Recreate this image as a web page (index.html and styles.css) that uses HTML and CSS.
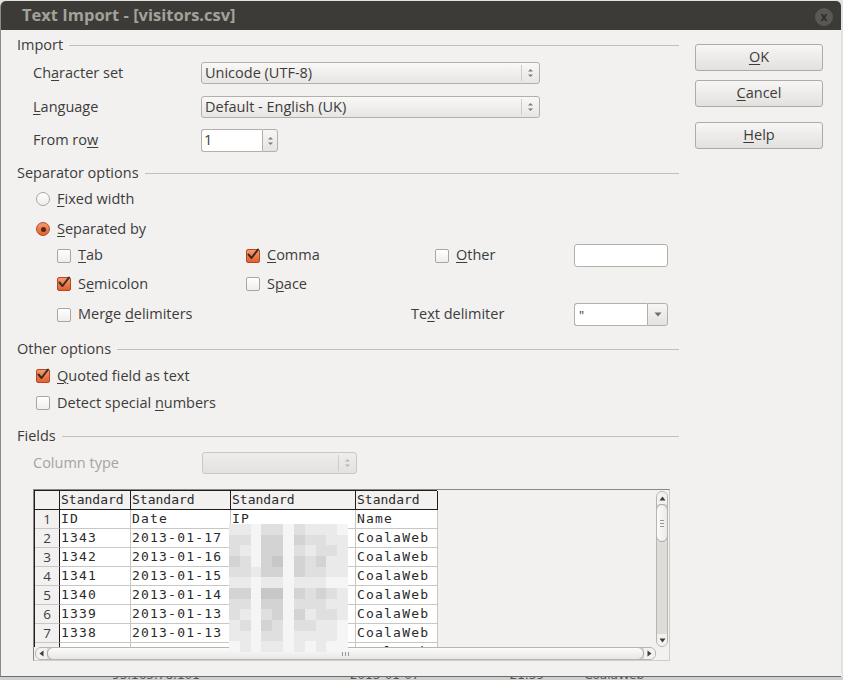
FILE: index.html
```html
<!DOCTYPE html>
<html lang="en">
<head>
<meta charset="utf-8">
<title>Text Import - [visitors.csv]</title>
<link rel="stylesheet" href="styles.css">
</head>
<body>
<div class="screen">
  <div class="window">
    <div class="titlebar">
      <span class="title">Text Import - [visitors.csv]</span>
      <span class="close">x</span>
    </div>
    <div class="content">
      <div class="main">
        <div class="ghead g-import"><span class="t">Import</span><i class="rule"></i></div>

        <div class="frow r-charset">
          <span class="flabel t">Ch<u>a</u>racter set</span>
          <div class="combo wide"><span class="ctext t">Unicode (UTF-8)</span>
            <span class="updown"><svg width="7" height="12" viewBox="0 0 7 12"><path d="M1 4.5 L3.5 2 L6 4.5Z"/><path d="M1 7.5 L3.5 10 L6 7.5Z"/></svg></span>
          </div>
        </div>

        <div class="frow r-lang">
          <span class="flabel t"><u>L</u>anguage</span>
          <div class="combo wide"><span class="ctext t">Default - English (UK)</span>
            <span class="updown"><svg width="7" height="12" viewBox="0 0 7 12"><path d="M1 4.5 L3.5 2 L6 4.5Z"/><path d="M1 7.5 L3.5 10 L6 7.5Z"/></svg></span>
          </div>
        </div>

        <div class="frow r-from">
          <span class="flabel t">From ro<u>w</u></span>
          <div class="spinbox">
            <span class="entry"><span class="t">1</span></span>
            <span class="spinbtn"><svg width="7" height="12" viewBox="0 0 7 12"><path d="M1 4.5 L3.5 2 L6 4.5Z"/><path d="M1 7.5 L3.5 10 L6 7.5Z"/></svg></span>
          </div>
        </div>

        <div class="ghead g-sep"><span class="t">Separator options</span><i class="rule"></i></div>

        <div class="opt r-fixed"><span class="radio"></span><span class="t"><u>F</u>ixed width</span></div>
        <div class="opt r-sepby"><span class="radio on"></span><span class="t"><u>S</u>eparated by</span></div>

        <div class="sepgrid">
          <div class="chk a1"><span class="box"></span><span class="t"><u>T</u>ab</span></div>
          <div class="chk a2"><span class="box on"><svg width="16" height="16" viewBox="0 0 16 16"><path d="M3.5 7.5 L6.5 11 L13 2.5"/></svg></span><span class="t"><u>C</u>omma</span></div>
          <div class="chk a3"><span class="box"></span><span class="t"><u>O</u>ther</span></div>
          <div class="entrybox a4"></div>

          <div class="chk b1"><span class="box on"><svg width="16" height="16" viewBox="0 0 16 16"><path d="M3.5 7.5 L6.5 11 L13 2.5"/></svg></span><span class="t">S<u>e</u>micolon</span></div>
          <div class="chk b2"><span class="box"></span><span class="t">S<u>p</u>ace</span></div>

          <div class="chk c1"><span class="box"></span><span class="t">Merge <u>d</u>elimiters</span></div>
          <div class="tlabel c3"><span class="t">Te<u>x</u>t delimiter</span></div>
          <div class="dropcombo c4"><span class="dentry">"</span><span class="dbtn"><svg width="8" height="5" viewBox="0 0 8 5"><path d="M0.5 0.5 L7.5 0.5 L4 4.5Z"/></svg></span></div>
        </div>

        <div class="ghead g-other"><span class="t">Other options</span><i class="rule"></i></div>
        <div class="opt r-quoted"><span class="box on"><svg width="16" height="16" viewBox="0 0 16 16"><path d="M3.5 7.5 L6.5 11 L13 2.5"/></svg></span><span class="t"><u>Q</u>uoted field as text</span></div>
        <div class="opt r-detect"><span class="box"></span><span class="t">Detect special <u>n</u>umbers</span></div>

        <div class="ghead g-fields"><span class="t">Fields</span><i class="rule"></i></div>
        <div class="frow r-coltype">
          <span class="flabel disabled t">Column type</span>
          <div class="combo narrow off"><span class="ctext"></span>
            <span class="updown"><svg width="7" height="12" viewBox="0 0 7 12"><path d="M1 4.5 L3.5 2 L6 4.5Z"/><path d="M1 7.5 L3.5 10 L6 7.5Z"/></svg></span>
          </div>
        </div>

        <div class="tablebox">
          <div class="sheetarea">
            <div class="sheet">
              <div class="corner"></div>
              <div class="hd">Standard</div><div class="hd">Standard</div><div class="hd">Standard</div><div class="hd">Standard</div>

              <div class="rn">1</div><div class="cell">ID</div><div class="cell">Date</div><div class="cell">IP</div><div class="cell">Name</div>
              <div class="rn">2</div><div class="cell">1343</div><div class="cell">2013-01-17</div><div class="cell"></div><div class="cell">CoalaWeb</div>
              <div class="rn">3</div><div class="cell">1342</div><div class="cell">2013-01-16</div><div class="cell"></div><div class="cell">CoalaWeb</div>
              <div class="rn">4</div><div class="cell">1341</div><div class="cell">2013-01-15</div><div class="cell"></div><div class="cell">CoalaWeb</div>
              <div class="rn">5</div><div class="cell">1340</div><div class="cell">2013-01-14</div><div class="cell"></div><div class="cell">CoalaWeb</div>
              <div class="rn">6</div><div class="cell">1339</div><div class="cell">2013-01-13</div><div class="cell"></div><div class="cell">CoalaWeb</div>
              <div class="rn">7</div><div class="cell">1338</div><div class="cell">2013-01-13</div><div class="cell"></div><div class="cell">CoalaWeb</div>
              <div class="rn">8</div><div class="cell">1337</div><div class="cell">2013-01-12</div><div class="cell"></div><div class="cell">CoalaWeb</div>
            </div>
          </div>
          <div class="vscroll">
            <span class="varrow"><svg width="7" height="5" viewBox="0 0 7 5"><path d="M0.5 4.5 L3.5 0.5 L6.5 4.5Z"/></svg></span>
            <span class="vthumb"><i></i><i></i><i></i></span>
            <span class="vtrack"></span>
            <span class="varrow"><svg width="7" height="5" viewBox="0 0 7 5"><path d="M0.5 0.5 L3.5 4.5 L6.5 0.5Z"/></svg></span>
          </div>
          <div class="hscroll">
            <span class="harrow"><svg width="5" height="7" viewBox="0 0 5 7"><path d="M4.5 0.5 L0.5 3.5 L4.5 6.5Z"/></svg></span>
            <span class="hthumb"><i></i><i></i><i></i></span>
            <span class="harrow"><svg width="5" height="7" viewBox="0 0 5 7"><path d="M0.5 0.5 L4.5 3.5 L0.5 6.5Z"/></svg></span>
          </div>
          <div class="scorner"></div>

          <div class="mosaic">
            <i class="m2"></i><i class="m2"></i><i class="m1"></i><i class="m3"></i><i class="m3"></i><i class="m1"></i><i class="m3"></i><i class="m2"></i><i class="m2"></i><i class="m2"></i><i class="m1"></i>
            <i class="m3"></i><i class="m3"></i><i class="m1"></i><i class="m4"></i><i class="m4"></i><i class="m1"></i><i class="m4"></i><i class="m3"></i><i class="m3"></i><i class="m2"></i><i class="m2"></i>
            <i class="m3"></i><i class="m2"></i><i class="m1"></i><i class="m4"></i><i class="m4"></i><i class="m1"></i><i class="m3"></i><i class="m2"></i><i class="m3"></i><i class="m3"></i><i class="m2"></i>
            <i class="m4"></i><i class="m3"></i><i class="m1"></i><i class="m4"></i><i class="m5"></i><i class="m1"></i><i class="m4"></i><i class="m3"></i><i class="m4"></i><i class="m2"></i><i class="m2"></i>
            <i class="m3"></i><i class="m3"></i><i class="m2"></i><i class="m4"></i><i class="m4"></i><i class="m1"></i><i class="m4"></i><i class="m3"></i><i class="m3"></i><i class="m2"></i><i class="m2"></i>
            <i class="m2"></i><i class="m2"></i><i class="m1"></i><i class="m2"></i><i class="m2"></i><i class="m1"></i><i class="m2"></i><i class="m2"></i><i class="m2"></i><i class="m1"></i><i class="m1"></i>
            <i class="m4"></i><i class="m4"></i><i class="m1"></i><i class="m5"></i><i class="m5"></i><i class="m1"></i><i class="m4"></i><i class="m3"></i><i class="m4"></i><i class="m3"></i><i class="m2"></i>
            <i class="m3"></i><i class="m3"></i><i class="m1"></i><i class="m4"></i><i class="m4"></i><i class="m1"></i><i class="m3"></i><i class="m3"></i><i class="m3"></i><i class="m2"></i><i class="m2"></i>
            <i class="m3"></i><i class="m2"></i><i class="m1"></i><i class="m3"></i><i class="m4"></i><i class="m1"></i><i class="m4"></i><i class="m2"></i><i class="m3"></i><i class="m3"></i><i class="m2"></i>
            <i class="m2"></i><i class="m3"></i><i class="m1"></i><i class="m4"></i><i class="m3"></i><i class="m1"></i><i class="m3"></i><i class="m3"></i><i class="m2"></i><i class="m2"></i><i class="m1"></i>
            <i class="m2"></i><i class="m2"></i><i class="m1"></i><i class="m3"></i><i class="m3"></i><i class="m1"></i><i class="m2"></i><i class="m2"></i><i class="m2"></i><i class="m2"></i><i class="m1"></i>
            <i class="m1"></i><i class="m2"></i><i class="m1"></i><i class="m2"></i><i class="m2"></i><i class="m1"></i><i class="m2"></i><i class="m1"></i><i class="m2"></i><i class="m1"></i><i class="m1"></i>
          </div>
        </div>
      </div>

      <div class="side">
        <div class="btn b-ok"><span class="t"><u>O</u>K</span></div>
        <div class="btn b-cancel"><span class="t"><u>C</u>ancel</span></div>
        <div class="btn b-help"><span class="t"><u>H</u>elp</span></div>
      </div>
    </div>
  </div>
  <div class="under">
    <span class="u1">93.163.78.101</span>
    <span class="u2">2013-01-07</span>
    <span class="u3">21:59</span>
    <span class="u4">CoalaWeb</span>
  </div>
</div>
</body>
</html>
```
FILE: styles.css
```css
* { box-sizing: border-box; }
html, body { margin: 0; padding: 0; }
body {
  width: 843px;
  height: 680px;
  overflow: hidden;
  background: #e2e2e2;
  font-family: "Open Sans", "DejaVu Sans", sans-serif;
  font-size: 14.5px;
  color: #3c3c3c;
}
u { text-decoration: underline; text-underline-offset: 2px; text-decoration-thickness: 1px; }
.t { padding-bottom: 2px; }

.screen { display: flex; flex-direction: column; height: 680px; padding-top: 1px; }

.window {
  width: 841px;
  height: 676px;
  display: flex;
  flex-direction: column;
  background: #f2f1f0;
  border-left: 1px solid #8d8b87;
  border-bottom: 1px solid #6f6d69;
  border-radius: 6px 6px 0 0;
}

.titlebar {
  height: 29px;
  flex: none;
  background: #3c3b37;
  border-radius: 5px 5px 0 0;
  display: flex;
  align-items: center;
  justify-content: space-between;
  padding: 0 8px 0 21px;
}
.title { color: #a3a19c; font-weight: 700; font-size: 16.5px; padding-bottom: 2px; }
.close {
  width: 18px; height: 18px; border-radius: 50%;
  background: #5a5853;
  color: #2f2e2b;
  font-size: 12px; font-weight: 700;
  display: flex; align-items: center; justify-content: center;
  line-height: 1;
  margin-top: 2px;
}

.content { flex: 1; display: flex; }

.main { width: 678px; padding-left: 16px; display: flex; flex-direction: column; }

.ghead { height: 20px; display: flex; align-items: center; gap: 6px; flex: none; }
.ghead .rule { flex: 1; height: 1px; background: #c2c0bb; margin-top: 0; }

.g-import { margin-top: 5px; }
.g-sep { margin-top: 11px; }
.g-other { margin-top: 13px; }
.g-fields { margin-top: 13px; }

.frow { display: flex; align-items: center; padding-left: 16px; flex: none; }
.flabel { width: 168px; flex: none; }
.flabel.disabled { color: #a5a39f; width: 169px; }
.r-charset { margin-top: 7px; height: 22px; }
.r-lang { margin-top: 12px; height: 22px; }
.r-from { margin-top: 11px; height: 23px; }
.r-coltype { margin-top: 6px; height: 22px; }

.combo {
  height: 22px;
  border: 1px solid #b3b0aa;
  border-radius: 3px;
  background: linear-gradient(#f9f8f7, #e8e6e3);
  display: flex;
  align-items: center;
  padding-left: 3px;
}
.combo.wide { width: 339px; }
.combo.narrow { width: 155px; }
.combo.off { background: linear-gradient(#eeedeb, #e4e2df); border-color: #cac8c4; }
.ctext { flex: 1; white-space: nowrap; }
.updown {
  width: 18px; height: 16px;
  border-left: 1px solid #d0cdc8;
  display: flex; align-items: center; justify-content: center;
}
.updown svg path { fill: #7d7b76; }
.combo.off .updown svg path { fill: #b8b6b1; }

.spinbox { display: flex; height: 23px; }
.entry {
  width: 61px; height: 23px;
  background: #fff;
  border: 1px solid #b3b0aa;
  border-right: none;
  border-radius: 3px 0 0 3px;
  padding-left: 2px;
  display: flex; align-items: center;
}
.spinbtn {
  width: 16px; height: 23px;
  border: 1px solid #b3b0aa;
  border-radius: 0 3px 3px 0;
  background: linear-gradient(#f7f6f5, #e6e4e1);
  display: flex; align-items: center; justify-content: center;
}
.spinbtn svg path { fill: #7d7b76; }

.opt { display: flex; align-items: center; gap: 7px; padding-left: 19px; height: 20px; flex: none; }
.r-fixed { margin-top: 6px; }
.r-sepby { margin-top: 10px; }
.r-quoted { margin-top: 7px; }
.r-detect { margin-top: 7px; }

.radio {
  width: 14px; height: 14px; border-radius: 50%;
  border: 1px solid #a8a6a0;
  background: linear-gradient(#ffffff, #eeedeb);
  flex: none;
  display: flex; align-items: center; justify-content: center;
}
.radio.on {
  border-color: #b34d22;
  background: linear-gradient(#f39a72, #e2602e);
}
.radio.on::after {
  content: "";
  width: 5px; height: 5px; border-radius: 50%;
  background: #5b2814;
}

.box {
  width: 14px; height: 14px;
  border: 1px solid #a8a6a0;
  border-radius: 2px;
  background: linear-gradient(#ffffff, #efeeec);
  flex: none;
  position: relative;
}
.box.on {
  border-color: #b04b20;
  background: linear-gradient(#f39a72, #e2602e);
}
.box svg { position: absolute; left: -2px; top: -3px; }
.box svg path { fill: none; stroke: #3d2a20; stroke-width: 2; stroke-linecap: round; stroke-linejoin: round; }

.sepgrid {
  margin-top: 5px;
  padding-left: 40px;
  display: grid;
  grid-template-columns: 189px 165px 24px 139px 94px;
  grid-template-rows: 23px 27px 32px;
  align-items: end;
  flex: none;
}
.chk { display: flex; align-items: center; gap: 7px; height: 20px; }
.a1 { grid-column: 1; grid-row: 1; align-self: center; }
.a2 { grid-column: 2; grid-row: 1; align-self: center; }
.a3 { grid-column: 4; grid-row: 1; align-self: center; }
.a4 { grid-column: 5; grid-row: 1; }
.b1 { grid-column: 1; grid-row: 2; }
.b2 { grid-column: 2; grid-row: 2; }
.c1 { grid-column: 1; grid-row: 3; height: 23px; }
.c3 { grid-column: 3 / span 2; grid-row: 3; height: 23px; display: flex; align-items: center; }
.c4 { grid-column: 5; grid-row: 3; }

.entrybox {
  height: 23px;
  background: #fff;
  border: 1px solid #b3b0aa;
  border-radius: 3px;
}
.dropcombo { height: 23px; display: flex; }
.dentry {
  flex: 1;
  background: #fff;
  border: 1px solid #b3b0aa;
  border-right: none;
  border-radius: 3px 0 0 3px;
  padding-left: 4px;
  display: flex; align-items: center;
  font-size: 13px;
}
.dbtn {
  width: 21px;
  border: 1px solid #b3b0aa;
  border-radius: 0 3px 3px 0;
  background: linear-gradient(#f7f6f5, #e4e2df);
  display: flex; align-items: center; justify-content: center;
}
.dbtn svg path { fill: #6f6d69; }

/* preview table */
.tablebox {
  margin-top: 15px;
  margin-left: 16px;
  width: 637px;
  height: 172px;
  border: 1px solid #cfcdc9;
  border-top-color: #8a8885;
  border-left-color: #8a8885;
  display: grid;
  grid-template-columns: 1fr 13px;
  grid-template-rows: 1fr 13px;
  position: relative;
  background: #f2f1f0;
  flex: none;
}
.sheetarea { overflow: hidden; grid-column: 1; grid-row: 1; }
.sheet {
  display: grid;
  grid-template-columns: 25px 71px 100px 125px 82px;
  grid-auto-rows: 19px;
  width: 403px;
  border-left: 1px solid #1e1e1e;
  border-top: 1px solid #1e1e1e;
  font-family: "DejaVu Sans Mono", "Liberation Mono", monospace;
  font-size: 13px;
  color: #2a2a2a;
}
.corner, .hd {
  background: #f2f1f0;
  border-right: 1px solid #1e1e1e;
  border-bottom: 1px solid #1e1e1e;
}
.hd { padding-left: 1px; line-height: 18px; }
.rn {
  background: #f2f1f0;
  border-right: 1px solid #1e1e1e;
  border-bottom: 1px solid #c9c7c3;
  font-family: "Open Sans", sans-serif;
  font-size: 13.5px;
  text-align: center;
  line-height: 18px;
  color: #3c3c3c;
}
.cell {
  background: #fff;
  border-right: 1px solid #c9c7c3;
  border-bottom: 1px solid #c9c7c3;
  padding-left: 1px;
  line-height: 18px;
  letter-spacing: 1.2px;
  white-space: nowrap;
  overflow: hidden;
}

.vscroll {
  grid-column: 2; grid-row: 1;
  margin: 1px 1px 0 0;
  border: 1px solid #b7b5b0;
  border-radius: 6px;
  background: #dedcd8;
  display: flex; flex-direction: column;
  overflow: hidden;
}
.varrow {
  height: 12px; flex: none;
  display: flex; align-items: center; justify-content: center;
  background: #f2f1f0;
}
.varrow svg path, .harrow svg path { fill: #3c3c3c; }
.vthumb {
  height: 38px; flex: none;
  border: 1px solid #a9a6a1;
  border-radius: 6px;
  margin: 0 -1px;
  background: linear-gradient(90deg, #fbfbfa, #ebe9e6);
  display: flex; flex-direction: column; align-items: center; justify-content: center; gap: 2px;
}
.vthumb i { width: 4px; height: 1px; background: #9a9893; }
.vtrack { flex: 1; }

.hscroll {
  grid-column: 1; grid-row: 2;
  margin-left: 1px;
  border: 1px solid #b7b5b0;
  border-radius: 6px;
  background: #dedcd8;
  display: flex;
  overflow: hidden;
}
.harrow {
  width: 11px; flex: none;
  display: flex; align-items: center; justify-content: center;
  background: #f2f1f0;
}
.hthumb {
  flex: 1;
  border: 1px solid #a9a6a1;
  border-radius: 6px;
  margin: -1px 0;
  background: linear-gradient(#fbfbfa, #e9e7e4);
  display: flex; align-items: center; justify-content: center; gap: 2px;
}
.hthumb i { width: 1px; height: 4px; background: #9a9893; }
.scorner { grid-column: 2; grid-row: 2; background: #f2f1f0; }

.mosaic {
  position: absolute;
  left: 195px;
  top: 34px;
  width: 119px;
  height: 128px;
  display: grid;
  grid-template-columns: repeat(11, 1fr);
  grid-template-rows: repeat(12, 1fr);
}
.m1 { background: #f5f5f5; }
.m2 { background: #eaeaea; }
.m3 { background: #dfdfdf; }
.m4 { background: #d3d3d3; }
.m5 { background: #c7c7c7; }

/* buttons */
.side { margin-left: 16px; padding-top: 14px; width: 128px; display: flex; flex-direction: column; }
.btn {
  height: 27px;
  border: 1px solid #aeaba6;
  border-radius: 3px;
  background: linear-gradient(#f7f6f5, #e3e1de);
  display: flex; align-items: center; justify-content: center;
  flex: none;
}
.b-cancel { margin-top: 9px; }
.b-help { margin-top: 15px; }

.under {
  height: 3px;
  overflow: hidden;
  background: #cfcfcf;
  display: flex;
  font-family: "DejaVu Sans", sans-serif;
  font-size: 12px;
  color: #555;
  line-height: 10px;
}
.under span { margin-top: -7px; }
.u1 { margin-left: 112px; }
.u2 { margin-left: 150px; }
.u3 { margin-left: 90px; }
.u4 { margin-left: 40px; }
```
